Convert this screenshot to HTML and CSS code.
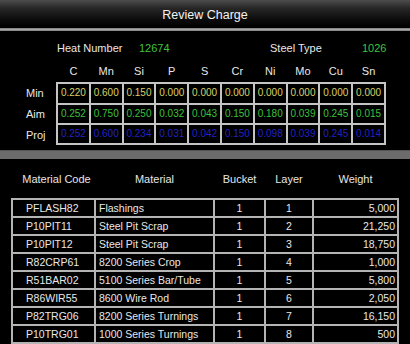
FILE: index.html
```html
<!DOCTYPE html>
<html>
<head>
<meta charset="utf-8">
<link rel="stylesheet" href="styles.css">
</head>
<body>
<div class="page">
  <header class="titlebar">Review Charge</header>
  <div class="sep"></div>
  <section class="info">
    <span class="lbl">Heat Number</span>
    <span class="val">12674</span>
    <span class="lbl">Steel Type</span>
    <span class="val">1026</span>
  </section>
  <section class="chem">
    <div class="chem-heads">
      <span>C</span><span>Mn</span><span>Si</span><span>P</span><span>S</span><span>Cr</span><span>Ni</span><span>Mo</span><span>Cu</span><span>Sn</span>
    </div>
    <div class="chem-body">
      <div class="row-labels">
        <span>Min</span><span>Aim</span><span>Proj</span>
      </div>
      <div class="chem-grid">
        <span class="y">0.220</span><span class="y">0.600</span><span class="y">0.150</span><span class="y">0.000</span><span class="y">0.000</span><span class="y">0.000</span><span class="y">0.000</span><span class="y">0.000</span><span class="y">0.000</span><span class="y">0.000</span>
        <span class="g">0.252</span><span class="g">0.750</span><span class="g">0.250</span><span class="g">0.032</span><span class="g">0.043</span><span class="g">0.150</span><span class="g">0.180</span><span class="g">0.039</span><span class="g">0.245</span><span class="g">0.015</span>
        <span class="b">0.252</span><span class="b">0.600</span><span class="b">0.234</span><span class="b">0.031</span><span class="b">0.042</span><span class="b">0.150</span><span class="b">0.098</span><span class="b">0.039</span><span class="b">0.245</span><span class="b">0.014</span>
      </div>
    </div>
  </section>
  <div class="band"></div>
  <section class="materials">
    <div class="mat-heads">
      <span>Material Code</span><span>Material</span><span>Bucket</span><span>Layer</span><span>Weight</span>
    </div>
    <div class="mat-grid">
      <span class="code">PFLASH82</span><span class="name">Flashings</span><span class="num">1</span><span class="num">1</span><span class="wt">5,000</span>
      <span class="code">P10PIT11</span><span class="name">Steel Pit Scrap</span><span class="num">1</span><span class="num">2</span><span class="wt">21,250</span>
      <span class="code">P10PIT12</span><span class="name">Steel Pit Scrap</span><span class="num">1</span><span class="num">3</span><span class="wt">18,750</span>
      <span class="code">R82CRP61</span><span class="name">8200 Series Crop</span><span class="num">1</span><span class="num">4</span><span class="wt">1,000</span>
      <span class="code">R51BAR02</span><span class="name">5100 Series Bar/Tube</span><span class="num">1</span><span class="num">5</span><span class="wt">5,800</span>
      <span class="code">R86WIR55</span><span class="name">8600 Wire Rod</span><span class="num">1</span><span class="num">6</span><span class="wt">2,050</span>
      <span class="code">P82TRG06</span><span class="name">8200 Series Turnings</span><span class="num">1</span><span class="num">7</span><span class="wt">16,150</span>
      <span class="code">P10TRG01</span><span class="name">1000 Series Turnings</span><span class="num">1</span><span class="num">8</span><span class="wt">500</span>
      <span></span><span></span><span></span><span></span><span></span>
    </div>
  </section>
</div>
</body>
</html>
```
FILE: styles.css
```css
html, body {
  margin: 0;
  padding: 0;
  background: #000;
}
body {
  width: 410px;
  height: 344px;
  overflow: hidden;
  font-family: "Liberation Sans", Arial, sans-serif;
  color: #e6e6e6;
}
.page {
  display: flex;
  flex-direction: column;
}
.titlebar {
  height: 28px;
  line-height: 30px;
  text-align: center;
  font-size: 12.5px;
  color: #f2f2f2;
  background: linear-gradient(#4c4c4c 0%, #262626 30%, #0c0c0c 70%, #000 100%);
}
.sep {
  height: 3px;
  background: linear-gradient(#7a7a7a, #a8a8a8 50%, #7a7a7a);
}
.info {
  height: 32px;
  display: grid;
  grid-template-columns: 82px 131px 92px auto;
  align-items: center;
  padding-left: 57px;
  padding-top: 1px;
  box-sizing: border-box;
  font-size: 11px;
}
.info .lbl { color: #e8e8e8; }
.info .val { color: #3fc43f; }

.chem {
  display: flex;
  flex-direction: column;
}
.chem-heads {
  margin-left: 56px;
  width: 330px;
  box-sizing: border-box;
  padding: 0 2px;
  display: grid;
  grid-template-columns: repeat(10, 1fr);
  column-gap: 2px;
  height: 19px;
  font-size: 11px;
  line-height: 16px;
  text-align: center;
  color: #e8e8e8;
}
.chem-body {
  display: flex;
}
.row-labels {
  width: 56px;
  display: grid;
  grid-template-rows: 21px 21px 21px;
  font-size: 11px;
  color: #e8e8e8;
  padding-left: 26px;
  box-sizing: border-box;
}
.row-labels span {
  line-height: 22px;
}
.chem-grid {
  width: 330px;
  box-sizing: border-box;
  display: grid;
  grid-template-columns: repeat(10, 1fr);
  grid-template-rows: 19px 18px 18px;
  gap: 2px;
  padding: 2px;
  background: #c4c4c4;
}
.chem-grid span {
  background: #000;
  font-size: 10px;
  text-align: center;
  line-height: 18px;
}
.chem-grid .y { color: #d8d26a; }
.chem-grid .g { color: #3cc03c; }
.chem-grid .b { color: #2222c4; }

.band {
  margin-top: 5px;
  height: 9px;
  background: #6c6c6c;
  border-top: 1px solid #555;
  box-sizing: border-box;
}

.materials {
  display: flex;
  flex-direction: column;
}
.mat-heads {
  margin-left: 11px;
  width: 388px;
  box-sizing: border-box;
  padding: 0 2px;
  height: 39px;
  display: grid;
  grid-template-columns: 81px 117px 49px 46px 83px;
  column-gap: 2px;
  align-items: center;
  font-size: 11px;
  color: #e6e6e6;
  text-align: center;
}
.mat-heads span:first-child { padding-left: 6px; }
.mat-grid {
  margin-left: 11px;
  width: 388px;
  box-sizing: border-box;
  display: grid;
  grid-template-columns: 81px 117px 49px 46px 83px;
  grid-auto-rows: 16px;
  gap: 2px;
  padding: 2px;
  background: #b4b4b4;
}
.mat-grid span {
  background: #000;
  font-size: 10.5px;
  line-height: 17px;
  color: #e8e8e8;
  white-space: nowrap;
  overflow: hidden;
}
.mat-grid .code { padding-left: 13px; }
.mat-grid .name { padding-left: 3px; }
.mat-grid .num { text-align: center; }
.mat-grid .wt { text-align: right; padding-right: 2px; }
```
